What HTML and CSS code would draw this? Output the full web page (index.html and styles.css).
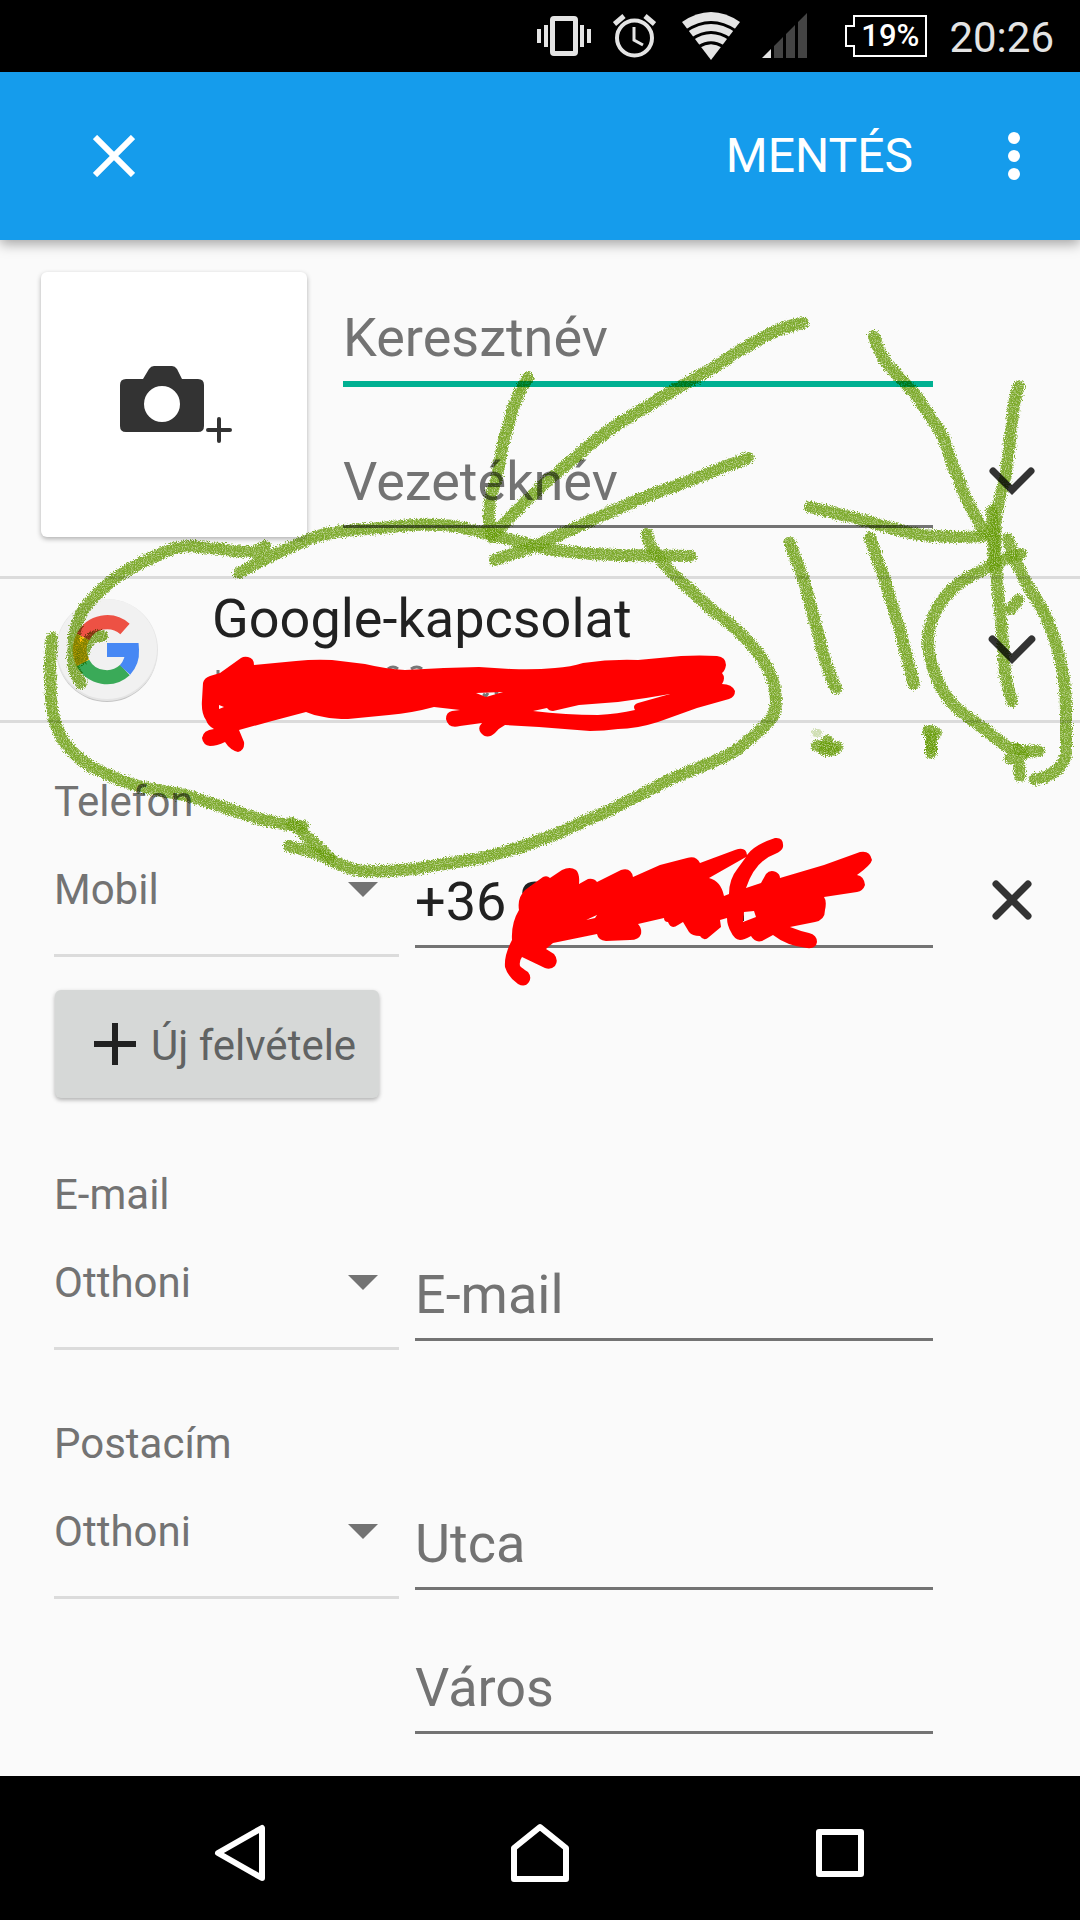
FILE: index.html
```html
<!DOCTYPE html>
<html lang="hu">
<head>
<meta charset="utf-8">
<meta name="viewport" content="width=device-width, initial-scale=1">
<title>Új névjegy</title>
<link rel="stylesheet" href="styles.css">
</head>
<body>
<div class="screen">
  <header class="status">
    <svg class="status-icon" width="54" height="42" viewBox="0 0 54 42" fill="#e4e4e4" aria-hidden="true">
      <path fill-rule="evenodd" d="M17 1h20q4 0 4 4v32q0 4-4 4H17q-4 0-4-4V5q0-4 4-4zm1 5v30h18V6z"/>
      <path d="M0 14h4v14H0zM7 10h4v22H7zM43 10h4v22h-4zM50 14h4v14h-4z"/>
    </svg>
    <svg class="status-icon" width="43" height="44" viewBox="0 0 43 44" fill="none" stroke="#e4e4e4" stroke-width="4" aria-hidden="true">
      <circle cx="21.500" cy="24" r="17.500"/>
      <path d="M1.500 10 11 2M41.500 10 32 2" stroke-width="5"/>
      <path d="M21 13v13l9 5" stroke-width="3"/>
    </svg>
    <svg class="status-icon icon-wifi" width="58" height="48" viewBox="0 0 58 48" aria-hidden="true">
      <path fill="#e4e4e4" d="M0 10Q29-10 58 10L29 48z"/>
      <path fill="none" stroke="#000" stroke-width="3" d="M4 19Q29 2 54 19M10 27Q29 14 48 27M17 34.500Q29 27 41 34.500"/>
    </svg>
    <svg class="status-icon" width="45" height="46" viewBox="0 0 45 46" aria-hidden="true">
      <path fill="#e4e4e4" d="M0 45 9 36v9z"/>
      <path fill="#444" d="M12 33l9-9v21h-9zM24 21l9-9v33h-9zM36 9l9-9v45h-9z"/>
    </svg>
    <span class="battery">
      <svg width="82" height="42" viewBox="0 0 82 42" fill="none" stroke="#fff" stroke-width="2" aria-hidden="true">
        <path d="M9 1h72v40H9V31H1V11h8z"/>
      </svg>
      <span class="battery-level">19%</span>
    </span>
    <time class="clock">20:26</time>
  </header>

  <div class="appbar">
    <button class="icon-button" type="button" aria-label="Bezárás">
      <svg width="42" height="42" viewBox="0 0 42 42" stroke="#fff" stroke-width="6" aria-hidden="true"><path d="M2 2l38 38M40 2 2 40"/></svg>
    </button>
    <button class="save" type="submit" form="contact">MENTÉS</button>
    <button class="icon-button" type="button" aria-label="További lehetőségek">
      <svg width="12" height="48" viewBox="0 0 12 48" fill="#fff" aria-hidden="true"><circle cx="6" cy="6" r="6"/><circle cx="6" cy="24" r="6"/><circle cx="6" cy="42" r="6"/></svg>
    </button>
  </div>

  <form class="form" id="contact">
    <section class="identity">
      <button class="photo" type="button" aria-label="Fénykép hozzáadása">
        <svg width="112" height="78" viewBox="0 0 112 78" fill="#333" aria-hidden="true">
          <path fill-rule="evenodd" d="M6 13h17l6-10q2-3 5-3h18q3 0 5 3l5 10h16q6 0 6 6v41q0 6-6 6H6q-6 0-6-6V19q0-6 6-6zm36 7a18 18 0 100 36 18 18 0 000-36z"/>
          <path fill="none" stroke="#333" stroke-width="4" stroke-linecap="round" d="M99 53v22M88 64h22"/>
        </svg>
      </button>
      <div class="names">
        <input class="field focused" type="text" placeholder="Keresztnév" aria-label="Keresztnév">
        <input class="field" type="text" placeholder="Vezetéknév" aria-label="Vezetéknév">
      </div>
      <button class="side-button" type="button" aria-label="További névmezők">
        <svg width="46" height="28" viewBox="0 0 46 28" fill="none" stroke="#333" stroke-width="7" stroke-linecap="round" aria-hidden="true"><path d="M4 4l19 19L42 4"/></svg>
      </button>
    </section>

    <section class="account">
      <svg class="account-logo" width="106" height="108" viewBox="0 0 106 108" aria-hidden="true">
        <circle cx="53" cy="56" r="50" fill="#c4c4c4"/>
        <circle cx="53" cy="54" r="51" fill="#e4e4e4"/>
        <circle cx="53" cy="53" r="50" fill="#f1f1f1"/>
        <g fill="none" stroke-width="14">
          <path stroke="#ed5144" d="M71 33A27 27 0 0 0 29 41"/>
          <path stroke="#fbbc05" d="M29 41A27 27 0 0 0 29 67"/>
          <path stroke="#3aaa58" d="M29 67A27 27 0 0 0 71 74"/>
          <path stroke="#4788f4" d="M71 74A27 27 0 0 0 78 54H53"/>
        </g>
      </svg>
      <p class="account-name">Google-kapcsolat</p>
      <button class="side-button" type="button" aria-label="Fiók kiválasztása">
        <svg width="48" height="29" viewBox="0 0 46 28" fill="none" stroke="#333" stroke-width="7" stroke-linecap="round" aria-hidden="true"><path d="M4 4l19 19L42 4"/></svg>
      </button>
    </section>

    <section class="group">
      <h2 class="label">Telefon</h2>
      <div class="row">
        <div class="spinner"><select aria-label="Telefon típusa"><option>Mobil</option></select></div>
        <div class="fields"><input class="field" type="tel" value="+36 2" aria-label="Telefon"></div>
        <button class="side-button" type="button" aria-label="Törlés">
          <svg width="40" height="40" viewBox="0 0 40 40" stroke="#333" stroke-width="7" stroke-linecap="round" aria-hidden="true"><path d="M4 4l32 32M36 4 4 36"/></svg>
        </button>
      </div>
      <button class="add" type="button">
        <svg width="42" height="42" viewBox="0 0 42 42" stroke="#212121" stroke-width="6" aria-hidden="true"><path d="M21 0v42M0 21h42"/></svg>
        <span class="add-text">Új felvétele</span>
      </button>
    </section>

    <section class="group">
      <h2 class="label">E-mail</h2>
      <div class="row">
        <div class="spinner"><select aria-label="E-mail típusa"><option>Otthoni</option></select></div>
        <div class="fields"><input class="field" type="email" placeholder="E-mail" aria-label="E-mail"></div>
      </div>
    </section>

    <section class="group">
      <h2 class="label">Postacím</h2>
      <div class="row">
        <div class="spinner"><select aria-label="Postacím típusa"><option>Otthoni</option></select></div>
        <div class="fields">
          <input class="field" type="text" placeholder="Utca" aria-label="Utca">
          <input class="field" type="text" placeholder="Város" aria-label="Város">
        </div>
      </div>
    </section>
  </form>

  <nav class="navbar" aria-label="Rendszer">
    <button type="button" aria-label="Vissza"><svg width="60" height="60" viewBox="0 0 60 60" aria-hidden="true"><path d="M52 5v50L8 30z"/></svg></button>
    <button type="button" aria-label="Kezdőképernyő"><svg width="60" height="60" viewBox="0 0 60 60" aria-hidden="true"><path d="M4 56V25L30 4l26 21v31z"/></svg></button>
    <button type="button" aria-label="Áttekintés"><svg width="60" height="60" viewBox="0 0 60 60" aria-hidden="true"><path d="M9 9h42v42H9z"/></svg></button>
  </nav>

  <!-- Hand-drawn markup over the form -->
  <svg class="ink ink-marker" viewBox="0 0 1080 1920" preserveAspectRatio="xMidYMin meet" aria-hidden="true">
    <defs>
      <filter id="crayon" filterUnits="userSpaceOnUse" x="0" y="280" width="1080" height="640" color-interpolation-filters="sRGB">
        <feTurbulence type="fractalNoise" baseFrequency="0.9" numOctaves="2" seed="4" result="noise"/>
        <feOffset in="SourceGraphic" dx="0" dy="1" result="drawn"/>
        <feDisplacementMap in="drawn" in2="noise" scale="7" xChannelSelector="R" yChannelSelector="G" result="rough"/>
        <feColorMatrix in="noise" type="matrix" values="0 0 0 0 0  0 0 0 0 0  0 0 0 0 0  0 0 1.600 0 0.100" result="grain"/>
        <feComposite in="rough" in2="grain" operator="in"/>
      </filter>
    </defs>
    <g filter="url(#crayon)" fill="none" stroke="#6aa008" stroke-width="12" stroke-linecap="round" stroke-linejoin="round">
      <g>
        <path opacity=".85" d="M803 322Q780 326 760 338 736 351 713 367L674 389 618 423Q596 438 579 453L543 484 519 507 494 533"/>
        <path opacity=".85" d="M528 377Q518 392 513 408L503 443 496 480Q489 498 489 510 488 524 492 536"/>
        <path opacity=".85" d="M748 457Q722 466 697 477L642 497 590 520 535 545 495 559"/>
        <path opacity=".85" d="M239 572L275 553 312 537Q326 532 344 530L379 527 413 524Q436 523 454 525L489 533 516 540 535 545Q552 550 571 551 594 554 618 554L691 555"/>
        <path opacity=".85" d="M647 533Q649 544 656 553 666 567 681 580L713 610 Q731 622 745 637 760 652 768 668 776 684 776 700 776 712 770 720 759 731 745 742 735 751 722 757L671 778 614 807 556 833 518 847 482 857 413 868Q385 871 362 870 348 868 337 862L316 852 289 845"/>
        <path opacity=".85" d="M292 822l38 35"/>
        <path opacity=".85" d="M52 637L50 663 51 697Q52 714 57 727 61 738 69 747 78 757 90 765 112 777 138 785L189 795 241 812Q257 818 269 820 288 825 303 825"/>
        <path opacity=".85" d="M265 545Q258 551 251 551 236 551 220 548L189 545Q175 546 162 552L131 567Q114 577 100 590 88 601 81 613 75 625 74 637L73 660Q74 673 81 682"/>
        <path opacity=".85" d="M82 658Q84 645 90 638 96 634 102 635"/>
        <path opacity=".85" d="M874 335Q878 349 887 363L915 393 942 433 954 467 966 497 984 532"/>
        <path opacity=".85" d="M1019 385Q1014 398 1013 413L1006 473 996 513 995 543 997 580 1002 630 1005 673Q1008 688 1012 700"/>
        <path opacity=".85" d="M992 510l2 54"/>
        <path opacity=".85" d="M810 506L855 517 895 528Q914 534 934 535 960 537 982 535L995 532"/>
        <path opacity=".85" d="M790 542L804 580 820 640Q826 667 836 687"/>
        <path opacity=".85" d="M870 537L885 580 901 633 914 683"/>
        <path opacity=".85" d="M1021 553Q1008 556 998 562 976 571 958 583 943 595 936 610 929 623 928 637 928 654 934 670 939 686 950 700 962 713 978 723L1006 745Q1022 752 1039 750"/>
        <path opacity=".85" d="M1008 538L1014 557 1029 587Q1041 604 1049 623 1057 643 1061 663 1066 686 1066 710V753Q1064 762 1058 768 1048 777 1035 778"/>
        <path opacity=".85" d="M1018 748l2 27M1010 757l14-4"/>
        <path opacity=".85" d="M1011 608l7-9"/>
        <path opacity=".85" d="M931 730v22M928 730l8 2"/>
        <path opacity=".85" d="M931 734v14M817 745q10 3 20 1"/>
        <path opacity=".85" d="M827 740l-3 9 9 0"/>
        <path opacity=".3" stroke-width="8" d="M815 732h3"/>
      </g>
    </g>
  </svg>
  <svg class="ink" viewBox="0 0 1080 1920" preserveAspectRatio="xMidYMin meet" aria-hidden="true">
    <path fill="none" stroke="#777" stroke-width="3" d="M388 669q5-4 10 0M411 669q6-4 11 0M444 668v4M218 670v4M483 694l3 2 2-3M495 694l3-2"/>
    <path fill="#212121" d="M712 882q5 3 7 8l-4-3zM743 916v5h1v-9z"/>
    <path fill="#f00" fill-rule="evenodd" d="M248 657Q254 658 254 665L296 661Q314 659 332 660L365 664Q386 669 405 670L444 668 479 667 511 669Q535 670 555 668 571 667 583 663 610 659 638 660L681 656Q700 655 717 656 726 657 726 665 725 671 722 673 726 678 722 684 732 684 735 691 735 697 729 699L697 708 658 722Q636 729 618 729 604 731 590 731L539 727 505 725Q499 728 495 733 487 740 481 733 477 728 482 723L460 726Q448 729 446 719 446 712 452 711L460 710 434 707Q412 713 389 715L348 719Q334 719 324 717 315 716 306 712L272 721 239 730 244 742Q245 750 238 752 230 750 225 742 217 746 210 746 203 745 202 738 203 730 214 729 208 726 206 720 201 713 202 700L203 683Q204 678 210 676L220 673 241 658Q244 656 248 657zM219 705l5 2-5 2zM476 693l27-1-17 5zM670 694L646 698 618 702 579 705 553 711Q549 711 547 708L533 711Q566 715 598 715 618 714 635 710 632 705 638 703zM594 915l-20 6 10 0z"/>
    <path fill="#f00" fill-rule="evenodd" d="M543 877Q547 875 550 878L562 870Q570 866 576 870 580 874 579 884L588 879Q594 878 597 882L621 870Q631 867 633 877L660 865 687 858Q696 855 700 863L735 850Q746 846 747 855Q754 845 775 838 784 837 783 847 782 851 775 854 755 861 746 888L761 883 766 874Q770 869 776 872 780 874 780 878L824 865 860 852Q870 850 872 860 871 865 857 875 864 876 865 885 863 891 857 892L824 897Q827 901 825 910 825 920 815 922L790 927Q800 931 809 933 817 935 817 942 816 949 807 948 787 946 773 935L762 941Q755 943 751 936 744 940 740 940 734 939 731 932 727 925 727 918L720 920 721 927 709 937Q704 942 700 936 692 936 689 932L683 922 678 925Q671 930 668 922 664 922 664 918L638 924Q642 928 641 934 639 940 630 940L606 941Q598 940 597 934L553 943 546 949 554 954Q559 960 555 966 551 970 545 968L522 957Q519 961 520 966 522 968 528 972 532 977 529 982 525 988 518 984 508 977 505 967 504 955 512 940 511 923 519 910 517 898 525 890zM746 857L709 878Q721 881 724 896L729 894Q729 879 738 868zM744 912l10-1 2 6-13 5zM597 915l-11 5 9-2z"/>
  </svg>
</div>
</body>
</html>
```
FILE: styles.css
```css
* {
  box-sizing: border-box;
}

body {
  margin: 0;
  background: #fafafa;
  color: #212121;
  font-family: Roboto, "Noto Sans", sans-serif;
  font-size: 42px;
  line-height: 48px;
}

button,
input,
select {
  margin: 0;
  padding: 0;
  border: 0;
  border-radius: 0;
  background: none;
  color: inherit;
  font: inherit;
}

svg {
  display: block;
}

.screen {
  position: relative;
  display: flex;
  flex-direction: column;
  min-height: 100vh;
}

/* Status bar */
.status {
  display: flex;
  align-items: center;
  justify-content: flex-end;
  gap: 22px;
  height: 72px;
  padding-right: 26px;
  background: #000;
  color: #e4e4e4;
}

.icon-wifi {
  margin-left: 4px;
}

.battery {
  display: grid;
  align-items: center;
  margin-left: 16px;
}

.battery > * {
  grid-area: 1 / 1;
}

.battery-level {
  padding-left: 8px;
  color: #fff;
  font-size: 31px;
  font-weight: 500;
  line-height: 40px;
  text-align: center;
}

.clock {
  padding-top: 3px;
}

/* App bar */
.appbar {
  position: relative;
  display: flex;
  align-items: center;
  height: 168px;
  padding: 0 6px 0 54px;
  background: #159cec;
  box-shadow: 0 4px 12px rgba(0, 0, 0, 0.35);
  color: #fff;
}

.icon-button {
  display: grid;
  place-items: center;
  width: 120px;
  height: 120px;
}

.save {
  height: 120px;
  margin-left: auto;
  padding: 0 41px;
  font-size: 48px;
}

/* Form */
.form {
  flex: 1;
  padding-bottom: 42px;
}

.identity,
.account {
  display: flex;
  border-bottom: 3px solid #dbdbdb;
}

.identity {
  padding: 32px 0 39px 41px;
}

.photo {
  display: grid;
  place-items: center;
  flex: none;
  width: 266px;
  height: 265px;
  margin-right: 36px;
  border-radius: 6px;
  background: #fff;
  box-shadow: 0 2px 5px rgba(0, 0, 0, 0.3);
}

.photo svg {
  margin-left: 4px;
}

.names,
.fields {
  display: flex;
  flex-direction: column;
  gap: 66px;
  min-width: 0;
}

.names {
  flex: 1;
  padding-top: 34px;
}

.field {
  width: 100%;
  height: 78px;
  padding-bottom: 13px;
  border-bottom: 3px solid #737373;
  outline: none;
  font-size: 54px;
  line-height: 62px;
}

.field::placeholder {
  color: #737373;
  opacity: 1;
}

.focused {
  border-color: #00b092;
  box-shadow: 0 3px #00b092;
}

.side-button {
  display: grid;
  place-items: center;
  flex: none;
  width: 137px;
  height: 112px;
  margin-left: 10px;
}

.identity .side-button {
  align-self: flex-end;
}

.account {
  align-items: center;
  height: 144px;
  padding-left: 54px;
}

.account-name {
  flex: 1;
  align-self: flex-start;
  margin: 8px 0 0 52px;
  font-size: 54px;
  line-height: 64px;
}

.group {
  padding: 70px 0 0 54px;
}

.account + .group {
  padding-top: 55px;
}

.label {
  margin: 0 0 40px;
  color: #737373;
  font-size: 42px;
  font-weight: 400;
}

.row {
  display: grid;
  grid-template-columns: minmax(0, 345fr) minmax(0, 518fr) 131px;
  column-gap: 16px;
  align-items: start;
}

.row .side-button {
  width: 125px;
  height: 68px;
  margin-left: 0;
}

.fields {
  padding-top: 4px;
}

.spinner {
  position: relative;
}

.spinner select {
  display: block;
  width: 100%;
  height: 91px;
  padding-bottom: 40px;
  border-bottom: 3px solid #dbdbdb;
  outline: none;
  appearance: none;
  color: #737373;
}

.spinner::after {
  content: "";
  position: absolute;
  top: 16px;
  right: 21px;
  border: 15px solid transparent;
  border-top-color: #737373;
  border-bottom: 0;
  pointer-events: none;
}

.add {
  display: flex;
  align-items: center;
  gap: 15px;
  height: 108px;
  margin: 33px 0 3px 1px;
  padding: 0 23px 0 39px;
  border-radius: 6px;
  background: #d6d8d7;
  box-shadow: 0 2px 4px rgba(0, 0, 0, 0.3);
  color: #616363;
}

.add-text {
  padding-top: 3px;
}

/* System navigation */
.navbar {
  display: flex;
  justify-content: center;
  gap: 240px;
  height: 144px;
  padding-top: 10px;
  background: #000;
}

.navbar svg {
  fill: none;
  stroke: #fff;
  stroke-width: 6;
  stroke-linejoin: round;
}

/* Drawing layer */
.ink {
  position: absolute;
  inset: 0;
  width: 100%;
  height: 100%;
  pointer-events: none;
}

.ink-marker {
  mix-blend-mode: multiply;
}
```
